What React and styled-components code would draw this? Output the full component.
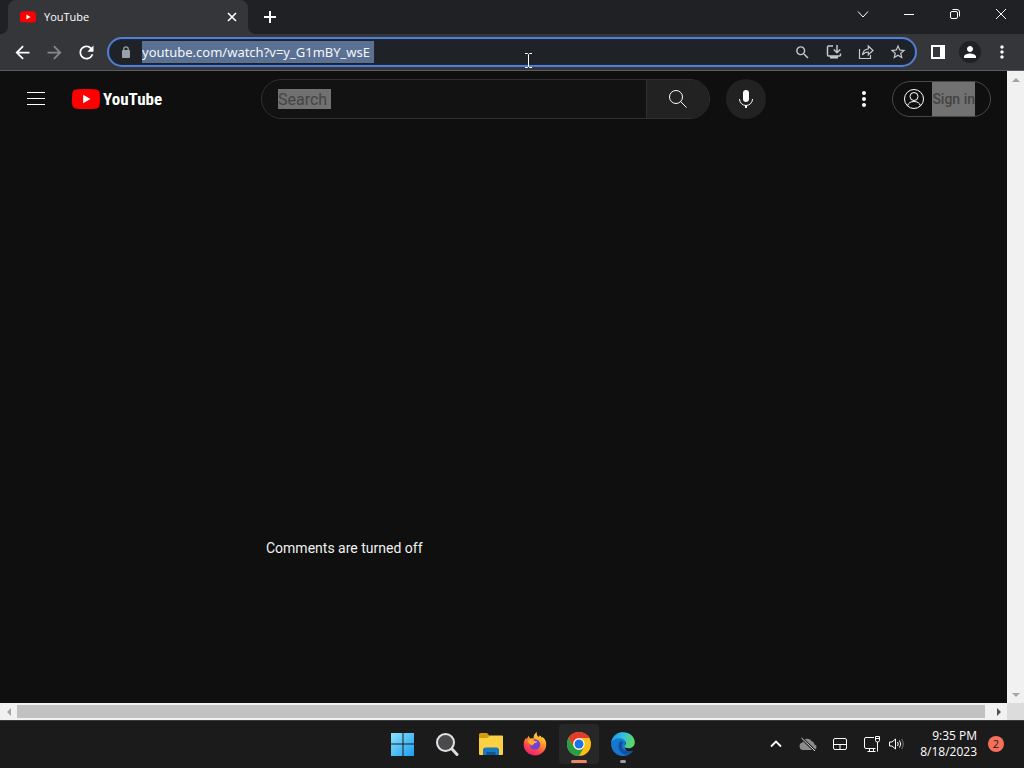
import { useState } from 'react';
import styled, { createGlobalStyle } from 'styled-components';
import {
  MdArrowBack,
  MdArrowForward,
  MdRefresh,
  MdSearch,
  MdStarBorder,
  MdMoreVert,
  MdPerson,
  MdMic,
} from 'react-icons/md';

const GlobalStyle = createGlobalStyle`
  * {
    box-sizing: border-box;
  }

  body {
    margin: 0;
    background: #0f0f0f;
    color: #fff;
    font-family: 'Open Sans', 'Noto Sans', sans-serif;
    font-size: 12px;
  }

  button,
  input {
    margin: 0;
    padding: 0;
    border: 0;
    background: none;
    color: inherit;
    font: inherit;
    outline: none;
  }

  svg {
    display: block;
    flex: none;
  }
`;

const Screen = styled.div`
  display: flex;
  flex-direction: column;
  min-height: 100vh;
`;

const TabStrip = styled.div`
  display: flex;
  height: 34px;
  padding-left: 8px;
  background: #202124;
`;

const Tab = styled.div`
  position: relative;
  display: flex;
  align-items: center;
  gap: 8px;
  width: 240px;
  padding: 0 8px 0 12px;
  border-radius: 8px 8px 0 0;
  background: #35363a;

  &::before,
  &::after {
    content: '';
    position: absolute;
    bottom: 0;
    width: 8px;
    height: 8px;
  }

  &::before {
    right: 100%;
    background: radial-gradient(circle at 0 0, transparent 8px, #35363a 8px);
  }

  &::after {
    left: 100%;
    background: radial-gradient(circle at 100% 0, transparent 8px, #35363a 8px);
  }
`;

const TabTitle = styled.span`
  flex: 1;
  font-size: 11px;
  line-height: 16px;
`;

const IconButton = styled.button`
  display: flex;
  align-items: center;
  justify-content: center;
  flex: none;
  width: ${(props) => props.$size || 32}px;
  height: ${(props) => props.$size || 32}px;
  border-radius: 50%;
  color: ${(props) => props.$color || '#fff'};
  background: ${(props) => props.$fill || 'none'};
`;

const NewTab = styled(IconButton)`
  align-self: center;
  margin-left: 6px;
`;

const WindowControls = styled.div`
  display: flex;
  margin-left: auto;
`;

const WindowButton = styled.button`
  display: flex;
  align-items: center;
  justify-content: center;
  width: 46px;
  height: 28px;
`;

const Toolbar = styled.div`
  display: flex;
  align-items: center;
  height: 37px;
  padding: 0 6px;
  border-bottom: 1px solid #5a5d60;
  background: #35363a;
`;

const Omnibox = styled.div`
  display: flex;
  align-items: center;
  flex: 1;
  min-width: 0;
  height: 30px;
  margin: 0 5px;
  padding: 0 1px 0 11px;
  border: 2px solid #557fcd;
  border-radius: 15px;
  background: #1f2227;
  box-shadow: inset 0 0 0 1px #122a4d;
`;

const Url = styled.input`
  width: 232px;
  height: 22px;
  margin: 0 auto 0 10px;
  background: #5b7193;
  color: #f4f6fa;
  font-family: 'Noto Sans', sans-serif;
  font-size: 13px;
`;

const Avatar = styled.span`
  display: flex;
  align-items: center;
  justify-content: center;
  width: 22px;
  height: 22px;
  border-radius: 50%;
  background: #202124;
`;

const Viewport = styled.div`
  display: grid;
  grid-template: 1fr 17px / 1fr 17px;
  flex: 1;
`;

const Page = styled.div`
  background: #0f0f0f;
  font-family: Roboto, sans-serif;
`;

const Masthead = styled.header`
  display: flex;
  align-items: center;
  height: 56px;
  padding: 0 16px;
`;

const MastheadStart = styled.div`
  display: flex;
  align-items: center;
  gap: 16px;
  width: 245px;
`;

const Logo = styled.a`
  display: flex;
  align-items: center;
  gap: 3px;
  color: #fff;
  font-family: 'Liberation Sans Narrow', 'Roboto Condensed', 'Liberation Sans', sans-serif;
  font-size: 17px;
  font-weight: 700;
  line-height: 20px;
  text-decoration: none;
`;

const SearchForm = styled.form`
  display: flex;
  flex: 1;
  height: 40px;
  border: 1px solid #303030;
  border-radius: 20px;
  background: #121212;
  overflow: hidden;
`;

const SearchField = styled.label`
  display: flex;
  align-items: center;
  flex: 1;
  padding-left: 16px;
`;

const SearchInput = styled.input`
  width: 53px;
  height: 20px;
  background: #717171;
  font-size: 16px;

  &::placeholder {
    color: #444;
    opacity: 1;
  }
`;

const SearchButton = styled.button`
  display: flex;
  align-items: center;
  justify-content: center;
  width: 63px;
  border-left: 1px solid #303030;
  background: #222;
`;

const MastheadEnd = styled.div`
  display: flex;
  align-items: center;
  gap: 8px;
  margin-left: 78px;
`;

const Mic = styled(IconButton)`
  margin-left: 16px;
`;

const SignIn = styled.a`
  display: flex;
  align-items: center;
  gap: 6px;
  height: 36px;
  padding: 0 15px 0 9px;
  border: 1px solid #484848;
  border-radius: 18px;
  color: #444;
  font-size: 14px;
  font-weight: 500;
  line-height: 34px;
  text-decoration: none;
  white-space: nowrap;
`;

const Highlight = styled.span`
  background: #717171;
`;

const Comments = styled.p`
  margin: 0;
  padding: 411px 16px 0 266px;
  color: #f1f1f1;
  font-size: 14px;
  line-height: 20px;
`;

const Scrollbar = styled.div`
  display: flex;
  flex-direction: ${(props) => (props.$vertical ? 'column' : 'row')};
  align-items: center;
  justify-content: space-between;
  background: #f1f1f1;
`;

const ScrollArrow = styled.button`
  display: flex;
  align-items: center;
  justify-content: center;
  width: 17px;
  height: 17px;
  color: ${(props) => (props.$active ? '#505050' : '#a3a3a3')};
`;

const Thumb = styled.div`
  flex: 1;
  height: 13px;
  margin-right: 5px;
  background: #c1c1c1;
`;

const Corner = styled.div`
  background: #dcdcdc;
`;

const Taskbar = styled.footer`
  display: grid;
  grid-template-columns: 1fr auto 1fr;
  height: 48px;
  background: #1b1b1b;
  box-shadow: inset 0 1px #3c3e3e;
`;

const Apps = styled.nav`
  grid-column: 2;
  display: flex;
  align-items: center;
  gap: 4px;
  padding-left: 2px;
`;

const AppButton = styled.button`
  position: relative;
  display: flex;
  align-items: center;
  justify-content: center;
  width: 40px;
  height: 40px;
  border-radius: 4px;
  background: ${(props) => (props.$active ? '#272727' : 'none')};

  &::after {
    content: '';
    position: absolute;
    bottom: 1px;
    display: ${(props) => (props.$running ? 'block' : 'none')};
    width: ${(props) => (props.$active ? 16 : 6)}px;
    height: 3px;
    border-radius: 2px;
    background: ${(props) => (props.$active ? '#ee8468' : '#9c9c9c')};
  }
`;

const Tray = styled.div`
  display: flex;
  align-items: center;
  justify-content: flex-end;
  padding-right: 20px;
`;

const TrayButton = styled.button`
  display: flex;
  align-items: center;
  justify-content: center;
  width: ${(props) => (props.$narrow ? 16 : 32)}px;
  height: 40px;
`;

const Clock = styled.time`
  margin: 0 11px 0 16px;
  line-height: 16px;
  text-align: right;
  white-space: nowrap;
`;

const Badge = styled.span`
  width: 16px;
  height: 16px;
  border-radius: 50%;
  background: #f4705a;
  color: #1b1b1b;
  font-size: 11px;
  line-height: 16px;
  text-align: center;
`;

const Cursor = styled.svg`
  position: absolute;
  top: 53px;
  left: 524px;
  pointer-events: none;
`;

const Icon = ({ size = 16, width = 1, children }) => (
  <svg
    width={size}
    height={size}
    viewBox={`0 0 ${size} ${size}`}
    fill="none"
    stroke="currentColor"
    strokeWidth={width}
  >
    {children}
  </svg>
);

const PlayLogo = ({ width, height }) => (
  <svg width={width} height={height} viewBox="0 0 28 20">
    <path
      fill="#f00"
      d="M27.4 3.1A3.5 3.5 0 0 0 24.9.6C22.7 0 14 0 14 0S5.300 0 3.100.6A3.500 3.500 0 0 0 .6 3.100C0 5.300 0 10 0 10s0 4.700.6 6.900a3.500 3.500 0 0 0 2.500 2.500C5.300 20 14 20 14 20s8.700 0 10.900-.6a3.500 3.500 0 0 0 2.500-2.500C28 14.700 28 10 28 10s0-4.700-.6-6.900z"
    />
    <path fill="#fff" d="M11.200 5.800v8.400l7.300-4.200z" />
  </svg>
);

const LockIcon = () => (
  <svg width="12" height="12" viewBox="0 0 12 12" fill="none">
    <path fill="#9aa0a6" d="M3 4h6q1 0 1 1v6q0 1-1 1H3q-1 0-1-1V5q0-1 1-1z" />
    <path stroke="#9aa0a6" strokeWidth="1.300" d="M3.800 5V3a2.200 2.200 0 0 1 4.400 0v2" />
  </svg>
);

const Triangle = ({ angle }) => (
  <svg width="8" height="8" viewBox="0 0 8 8">
    <path fill="currentColor" transform={`rotate(${angle} 4 4)`} d="M0 6l4-4 4 4z" />
  </svg>
);

const WindowsIcon = () => (
  <svg width="24" height="24" viewBox="0 0 24 24">
    <defs>
      <linearGradient id="win" x1="0" y1="0" x2="1" y2="1">
        <stop offset="0" stopColor="#8be4fb" />
        <stop offset="1" stopColor="#1b9df0" />
      </linearGradient>
    </defs>
    <path fill="url(#win)" d="M0 1h11.500v10.500H0zM12.500 1H23v10.500H12.500zM0 12.500h11.500V24H0zM12.500 12.500H23V24H12.500z" />
  </svg>
);

const SearchIcon = () => (
  <svg width="24" height="24" viewBox="0 0 24 24" fill="none">
    <path stroke="#dcdcdc" strokeWidth="3" strokeLinecap="round" d="M17 17l5 5.500" />
    <circle cx="10.500" cy="10.500" r="8.500" fill="#4a4a4c" stroke="#e4e4e4" strokeWidth="2" />
  </svg>
);

const FolderIcon = () => (
  <svg width="26" height="24" viewBox="0 0 26 24">
    <path fill="#d69a10" d="M1 2.500Q1 1 2.500 1H9l2.500 2.500V8H1z" />
    <path fill="#fbd042" d="M1 6h8l3-2.500h12q1 0 1 1V22q0 1-1 1H2q-1 0-1-1z" />
    <path fill="#1878c0" d="M5 23v-5q0-2.500 2.500-2.500h11Q21 15.500 21 18v5z" />
    <path fill="#0f5590" d="M8.500 20h9v3h-9z" />
  </svg>
);

const FirefoxIcon = () => (
  <svg width="24" height="24" viewBox="0 0 24 24">
    <defs>
      <linearGradient id="fox" x1=".8" y1="0" x2=".3" y2="1">
        <stop offset="0" stopColor="#fff04a" />
        <stop offset=".4" stopColor="#ff9a22" />
        <stop offset=".75" stopColor="#ff4050" />
        <stop offset="1" stopColor="#e51e78" />
      </linearGradient>
    </defs>
    <path
      fill="url(#fox)"
      d="M14 0c-.8 2.500.2 3.700 1.700 5 .8-.4 1-1 1-1.700 1.200.8 1.900 1.800 2.300 3 .3-.4.4-.9.300-1.500 3 2.200 4.200 5.200 3.900 8.500C22.700 19.300 18 23.500 12 23.500S.7 18.800.7 12.800c0-3.300 1-5.500 2.500-7.300l.5 2C4.500 6 5.200 4.400 5.700 3.800c.2 1.200.8 2.200 1.800 2.700 1-.2 2-.2 3 .1C10.400 3.700 11.600 1.400 14 0z"
    />
    <circle cx="12" cy="12.500" r="5.200" fill="#7540d6" />
    <path fill="#ffb02e" d="M5 8.200c2.500-1.500 4.800-.8 6.500.7l2.800.6c-.5 1.200-2 1.400-3 1.700-.6 1.200-1.600 1.200-2.300 2.400C7.500 12.500 5.300 11.500 5 8.200z" />
  </svg>
);

const ChromeIcon = () => (
  <svg width="24" height="24" viewBox="0 0 24 24">
    <circle cx="12" cy="12" r="12" fill="#fbc116" />
    <path fill="#e33b2e" d="M1.600 6A12 12 0 0 1 22.400 6H12a6 6 0 0 0-5.200 9z" />
    <path fill="#269e4c" d="M1.600 6A12 12 0 0 0 12 24l5.200-9A6 6 0 0 1 6.800 15z" />
    <circle cx="12" cy="12" r="5.700" fill="#fff" />
    <circle cx="12" cy="12" r="4.500" fill="#1a73e8" />
  </svg>
);

const EdgeIcon = () => (
  <svg width="24" height="24" viewBox="0 0 24 24">
    <defs>
      <linearGradient id="edge" x1="0" y1=".3" x2="1" y2=".5">
        <stop offset="0" stopColor="#1c9de0" />
        <stop offset=".5" stopColor="#35c1df" />
        <stop offset="1" stopColor="#63d857" />
      </linearGradient>
    </defs>
    <path fill="#1577cf" d="M12 0A12 12 0 1 0 22 18.700c-3 1.500-8 1.300-8-3.200V9z" />
    <path fill="url(#edge)" d="M.2 10.500C1.200 4.500 6 .2 12 .2c7 0 11.800 4.800 11.800 10 0 3.500-2.500 6-6 6-2.800 0-4.300-1-4.300-2 0-.7 1.200-1.200 1.200-3 0-2.800-2.800-5-6.200-5C4.600 6.200 1.500 8 .2 10.500z" />
    <path fill="#124f9f" d="M8.800 10C5.500 14.500 8.500 22 15.500 22.700c2.700-.6 5-2.200 6.400-4.200-5.400 2.500-10.800-.3-11-4.500-.1-1.700.6-2.800 1.500-3.800-1-.8-2.700-.9-3.600-.2z" />
  </svg>
);

const apps = [
  { name: 'Start', icon: <WindowsIcon /> },
  { name: 'Search', icon: <SearchIcon /> },
  { name: 'File Explorer', icon: <FolderIcon /> },
  { name: 'Firefox', icon: <FirefoxIcon /> },
  { name: 'Google Chrome', icon: <ChromeIcon />, active: true, running: true },
  { name: 'Microsoft Edge', icon: <EdgeIcon />, running: true },
];

const BrowserTabs = () => (
  <TabStrip>
    <Tab>
      <PlayLogo width={16} height={12} />
      <TabTitle>YouTube</TabTitle>
      <IconButton $size={16} aria-label="Close tab">
        <Icon size={10} width={1.600}>
          <path d="M1 1l8 8M9 1l-8 8" />
        </Icon>
      </IconButton>
    </Tab>
    <NewTab aria-label="New tab">
      <Icon size={14} width={2}>
        <path d="M7 1v12M1 7h12" />
      </Icon>
    </NewTab>
    <WindowControls>
      <WindowButton aria-label="Search tabs">
        <Icon size={12}>
          <path d="M1 3.500l5 5.500 5-5.500" />
        </Icon>
      </WindowButton>
      <WindowButton aria-label="Minimize">
        <Icon size={10}>
          <path d="M0 5.500h10" />
        </Icon>
      </WindowButton>
      <WindowButton aria-label="Restore">
        <Icon size={12}>
          <rect x="1.500" y="3.500" width="7" height="7" rx="1.500" />
          <path d="M3.500 1.500H8q2.500 0 2.500 2.500v4.500" />
        </Icon>
      </WindowButton>
      <WindowButton aria-label="Close">
        <Icon size={12}>
          <path d="M1 1l10 10M11 1L1 11" />
        </Icon>
      </WindowButton>
    </WindowControls>
  </TabStrip>
);

const BrowserToolbar = () => {
  const [url, setUrl] = useState('youtube.com/watch?v=y_G1mBY_wsE');

  return (
    <Toolbar>
      <IconButton aria-label="Back">
        <MdArrowBack size={21} />
      </IconButton>
      <IconButton $color="#87888b" aria-label="Forward">
        <MdArrowForward size={21} />
      </IconButton>
      <IconButton aria-label="Reload">
        <MdRefresh size={21} />
      </IconButton>
      <Omnibox>
        <LockIcon />
        <Url
          aria-label="Address"
          spellCheck={false}
          value={url}
          onChange={(e) => setUrl(e.target.value)}
        />
        <IconButton $color="#c5c8cc" aria-label="Zoom">
          <MdSearch size={17} />
        </IconButton>
        <IconButton $color="#c5c8cc" aria-label="Install">
          <Icon width={1.500}>
            <path d="M7 2H2.500Q1.500 2 1.500 3v8q0 1 1 1h11q1 0 1-1V9.500" />
            <path d="M11 1v7.500M7.800 5.500L11 8.700l3.200-3.200" />
            <path strokeWidth="2.500" d="M4 13.300h8" />
          </Icon>
        </IconButton>
        <IconButton $color="#c5c8cc" aria-label="Share">
          <Icon width={1.200}>
            <path d="M1.500 5v9.500h11V11" />
            <path d="M4.500 11c.4-3.800 2.600-5.800 5.800-6V2l4.700 4.500-4.700 4.300V8c-2.500 0-4.300.8-5.800 3z" />
          </Icon>
        </IconButton>
        <IconButton $color="#c5c8cc" aria-label="Bookmark">
          <MdStarBorder size={18} />
        </IconButton>
      </Omnibox>
      <IconButton aria-label="Side panel">
        <Icon size={14} width={2}>
          <path d="M1 1h12v12H1z" />
          <path fill="currentColor" stroke="none" d="M9 1h4v12H9z" />
        </Icon>
      </IconButton>
      <IconButton aria-label="Profile">
        <Avatar>
          <MdPerson size={18} />
        </Avatar>
      </IconButton>
      <IconButton aria-label="Menu">
        <MdMoreVert size={20} />
      </IconButton>
    </Toolbar>
  );
};

const WatchPage = () => {
  const [query, setQuery] = useState('');

  return (
    <Page>
      <Masthead>
        <MastheadStart>
          <IconButton $size={40} aria-label="Guide">
            <Icon size={18}>
              <path d="M0 2.500h18M0 8.500h18M0 14.500h18" />
            </Icon>
          </IconButton>
          <Logo href="#home">
            <PlayLogo width={28} height={20} />
            YouTube
          </Logo>
        </MastheadStart>
        <SearchForm onSubmit={(e) => e.preventDefault()}>
          <SearchField>
            <SearchInput
              aria-label="Search"
              placeholder="Search"
              value={query}
              onChange={(e) => setQuery(e.target.value)}
            />
          </SearchField>
          <SearchButton aria-label="Submit search">
            <Icon size={20}>
              <circle cx="8" cy="8" r="6.500" />
              <path d="M12.500 12.500l6 6" />
            </Icon>
          </SearchButton>
        </SearchForm>
        <Mic type="button" $size={40} $fill="#222" aria-label="Voice search">
          <svg width="24" height="24" viewBox="0 0 24 24">
            <rect x="9" y="3" width="6" height="12" rx="3" fill="#fff" />
            <path fill="none" stroke="#fff" d="M5.500 12a6.500 6.500 0 0 0 13 0" />
            <path fill="#fff" d="M11 18h2v3h-2z" />
          </svg>
        </Mic>
        <MastheadEnd>
          <IconButton $size={40} aria-label="Settings">
            <MdMoreVert size={24} />
          </IconButton>
          <SignIn href="#signin">
            <svg width="24" height="24" viewBox="0 0 24 24" fill="none" stroke="#fff">
              <circle cx="12" cy="12" r="9.500" />
              <circle cx="12" cy="9.500" r="4" />
              <path d="M5.500 19c.8-3.200 3.200-4.500 6.500-4.500s5.700 1.300 6.500 4.500" />
            </svg>
            <Highlight>Sign in</Highlight>
          </SignIn>
        </MastheadEnd>
      </Masthead>
      <Comments>Comments are turned off</Comments>
    </Page>
  );
};

const WindowsTaskbar = () => (
  <Taskbar>
    <Apps>
      {apps.map((app) => (
        <AppButton
          key={app.name}
          aria-label={app.name}
          $active={app.active}
          $running={app.running}
        >
          {app.icon}
        </AppButton>
      ))}
    </Apps>
    <Tray>
      <TrayButton aria-label="Hidden icons">
        <Icon size={12} width={1.800}>
          <path d="M1 8.500l5-5 5 5" />
        </Icon>
      </TrayButton>
      <TrayButton aria-label="OneDrive">
        <Icon size={18}>
          <path
            fill="#8c8c8c"
            stroke="none"
            d="M4.500 15A3.800 3.800 0 0 1 3.500 7.500 5 5 0 0 1 12.500 6a4 4 0 0 1 3 3.500A2.800 2.800 0 0 1 15 15z"
          />
          <path stroke="#1b1b1b" strokeWidth="2.500" d="M2.500 3l13.500 13" />
          <path stroke="#ddd" d="M2.500 3l13.500 13" />
        </Icon>
      </TrayButton>
      <TrayButton aria-label="Touchpad">
        <Icon>
          <rect x="1.500" y="2.500" width="13" height="11" rx="1.500" />
          <path d="M1.500 8.500h13M8 8.500v5" />
        </Icon>
      </TrayButton>
      <TrayButton aria-label="Network">
        <Icon size={18}>
          <path d="M11 2.500H3Q1.500 2.500 1.500 4v8q0 1.500 1.500 1.500h9.500M4.500 16.500h8M6.500 13.500v3M10.500 13.500v3" />
          <path d="M12.500 1.500h4v4q0 1.500-2 1.500t-2-1.500zM14.500 7v9.500M12.500 3.500h4" />
        </Icon>
      </TrayButton>
      <TrayButton $narrow aria-label="Volume">
        <Icon>
          <path d="M1.500 6v4H4l3.500 3V3L4 6zM9.500 6q1.500 2 0 4M11.500 4.500q2.500 3.500 0 7" />
          <path stroke="#777" d="M13.500 3q3.500 5 0 10" />
        </Icon>
      </TrayButton>
      <Clock dateTime="2023-08-18T21:35">
        9:35 PM
        <br />
        8/18/2023
      </Clock>
      <Badge>2</Badge>
    </Tray>
  </Taskbar>
);

const App = () => (
  <>
    <GlobalStyle />
    <Screen>
      <BrowserTabs />
      <BrowserToolbar />
      <Viewport>
        <WatchPage />
        <Scrollbar $vertical>
          <ScrollArrow aria-label="Scroll up">
            <Triangle angle={0} />
          </ScrollArrow>
          <ScrollArrow aria-label="Scroll down">
            <Triangle angle={180} />
          </ScrollArrow>
        </Scrollbar>
        <Scrollbar>
          <ScrollArrow aria-label="Scroll left">
            <Triangle angle={-90} />
          </ScrollArrow>
          <Thumb />
          <ScrollArrow $active aria-label="Scroll right">
            <Triangle angle={90} />
          </ScrollArrow>
        </Scrollbar>
        <Corner />
      </Viewport>
      <WindowsTaskbar />
    </Screen>
    <Cursor width="9" height="15" viewBox="0 0 9 15" fill="none" stroke="#fff">
      <path d="M1 .5h2.500l1 1 1-1H8M4.500 1.500v12M1 14.500h2.500l1-1 1 1H8" />
    </Cursor>
  </>
);

export default App;
